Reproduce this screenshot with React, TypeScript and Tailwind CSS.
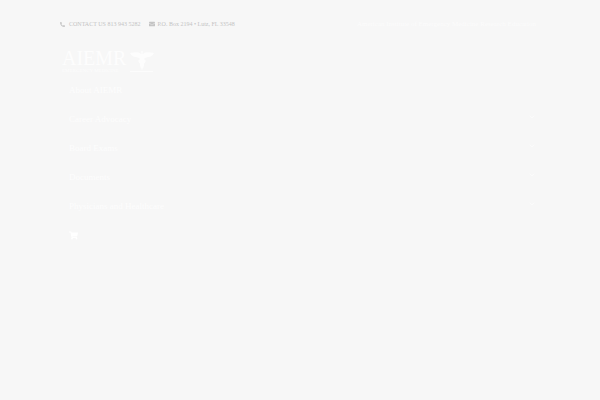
import React from "react";
import { ChevronDown } from "lucide-react";
import { FaPhoneAlt, FaEnvelope, FaShoppingCart } from "react-icons/fa";

const navItems = [
  { label: "About AIEMR", hasMenu: false },
  { label: "Career Advocacy", hasMenu: true },
  { label: "Board Exams", hasMenu: true },
  { label: "Documents", hasMenu: true },
  { label: "Physicians and Healthcare", hasMenu: true },
];

function TopBar() {
  return (
    <div className="flex items-center justify-between h-12 text-[6px] leading-3">
      <div className="flex items-center gap-[9px] text-[#c4c4c4]">
        <a href="tel:8139435282" className="flex items-center gap-1">
          <FaPhoneAlt size={5} />
          CONTACT US 813 943 5282
        </a>
        <a href="#address" className="flex items-center gap-[2px]">
          <FaEnvelope size={6} />
          P.O. Box 2194 • Lutz, FL 33548
        </a>
      </div>
      <p className="text-[#fcfcfc] text-[7px] pr-1">
        American Institute of Emergency Medicine Research Education
      </p>
    </div>
  );
}

function Logo() {
  return (
    <a href="#home" className="flex items-end gap-1 text-[#fdfdfd] px-[2px]">
      <span className="flex flex-col">
        <span className="text-[20px] leading-5">AIEMR</span>
        <span className="text-[5px] leading-[6px]">EMERGENCY MEDICINE</span>
      </span>
      <svg
        width="24"
        height="24"
        viewBox="0 0 24 24"
        fill="currentColor"
        aria-hidden="true"
      >
        <circle cx="12" cy="2" r="1" />
        <path d="M12 3L13 4C17 1 20 3 24 3C23 5 21 7 18 7L15 8L14 9L16 11L14 14L14 16L12 20L10 16L10 14L8 11L10 9L9 8L6 7C3 7 1 5 0 3C4 3 7 1 11 4Z" />
        <path d="M0 21H23V22H0Z" opacity="0.7" />
      </svg>
    </a>
  );
}

export default function App() {
  return (
    <div className="min-h-screen bg-[#f7f7f7] px-[60px] font-['Liberation_Serif',serif]">
      <TopBar />
      <header>
        <div className="flex h-[27px] items-start">
          <Logo />
        </div>
        <nav className="px-[9px]">
          <ul>
            {navItems.map((item) => (
              <li key={item.label} className="h-[29px] flex items-center">
                <button className="w-full flex items-center justify-between text-[9px] leading-3 text-[#fdfdfd]">
                  {item.label}
                  {item.hasMenu && (
                    <ChevronDown size={8} className="self-start mr-[-5px]" />
                  )}
                </button>
              </li>
            ))}
          </ul>
          <button
            aria-label="Cart"
            className="h-[30px] flex items-center text-white"
          >
            <FaShoppingCart size={9} />
          </button>
        </nav>
      </header>
    </div>
  );
}
